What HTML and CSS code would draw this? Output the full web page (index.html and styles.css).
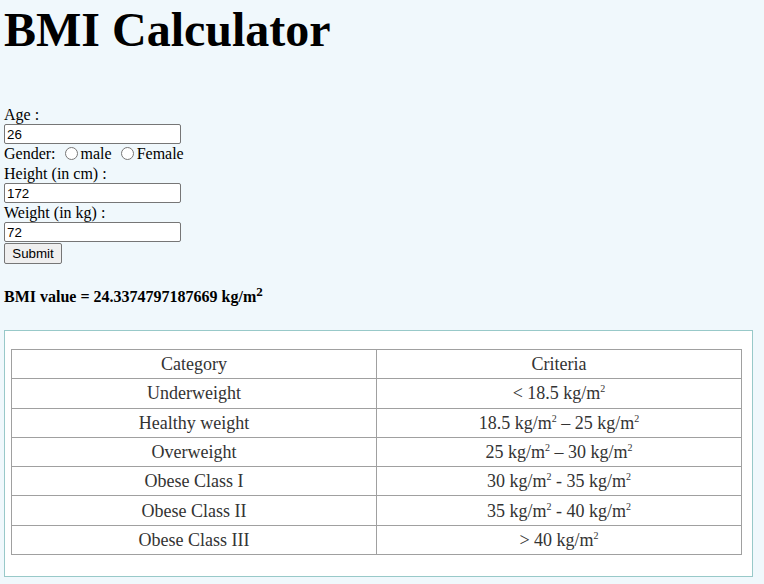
FILE: index.html
```html
<!DOCTYPE html>
<html>
<head>
<meta charset="utf-8">
<title>BMI Calculator</title>
<link rel="stylesheet" href="styles.css">
</head>
<body>
<h1 class="title">BMI Calculator</h1>
<form class="form">
  <div class="label">Age :</div>
  <div class="field"><input class="text" type="text" value="26"></div>
  <div class="label gender">Gender: <input type="radio" name="g">male <input type="radio" name="g">Female</div>
  <div class="label">Height (in cm) :</div>
  <div class="field"><input class="text" type="text" value="172"></div>
  <div class="label">Weight (in kg) :</div>
  <div class="field"><input class="text" type="text" value="72"></div>
  <div class="submit-row"><button class="btn" type="button">Submit</button></div>
</form>
<div class="result">BMI value = 24.3374797187669 kg/m<sup>2</sup></div>
<div class="chart">
  <table class="bmi">
    <tr><td>Category</td><td>Criteria</td></tr>
    <tr><td>Underweight</td><td>&lt; 18.5 kg/m<sup>2</sup></td></tr>
    <tr><td>Healthy weight</td><td>18.5 kg/m<sup>2</sup> – 25 kg/m<sup>2</sup></td></tr>
    <tr><td>Overweight</td><td>25 kg/m<sup>2</sup> – 30 kg/m<sup>2</sup></td></tr>
    <tr><td>Obese Class I</td><td>30 kg/m<sup>2</sup> - 35 kg/m<sup>2</sup></td></tr>
    <tr><td>Obese Class II</td><td>35 kg/m<sup>2</sup> - 40 kg/m<sup>2</sup></td></tr>
    <tr><td>Obese Class III</td><td>&gt; 40 kg/m<sup>2</sup></td></tr>
  </table>
</div>
</body>
</html>
```
FILE: styles.css
```css
html {
  background: #f0f8fc;
}
body {
  margin: 0;
  padding: 2px 4px 0 4px;
  background: #f0f8fc;
  color: #000;
  font-family: "Liberation Serif", "Times New Roman", serif;
  font-size: 16px;
}
.title {
  margin: 0 0 48px 0;
  font-size: 48px;
  line-height: 55px;
  font-weight: bold;
}
.form {
  margin: 0;
}
.label {
  height: 19px;
  line-height: 19px;
  white-space: nowrap;
}
.gender {
  height: 20px;
  line-height: 20px;
}
.gender input {
  margin: 0 3px 0 5px;
  width: 13px;
  height: 13px;
  vertical-align: -1px;
}
.field {
  height: 20px;
}
.text {
  display: block;
  box-sizing: border-box;
  width: 177px;
  height: 20px;
  margin: 0;
  padding: 1px 2px;
  border: 1px solid #767676;
  border-radius: 2px;
  background: #fff;
  font-family: "Liberation Sans", Arial, sans-serif;
  font-size: 13.333px;
  color: #000;
}
.submit-row {
  margin-top: 1px;
  height: 21px;
}
.btn {
  box-sizing: border-box;
  height: 21px;
  width: 58px;
  margin: 0;
  padding: 1px 6px;
  border: 1px solid #767676;
  border-radius: 2px;
  background: #efefef;
  font-family: "Liberation Sans", Arial, sans-serif;
  font-size: 13.333px;
  color: #000;
}
.result {
  margin-top: 23px;
  line-height: 19px;
  font-weight: bold;
}
.result sup {
  line-height: 0;
  font-size: 13px;
}
.chart {
  margin-top: 24px;
  box-sizing: border-box;
  width: 749px;
  border: 1px solid #98c9c9;
  background: #fff;
  padding: 18px 10px 21px 6px;
}
.bmi {
  width: 731px;
  border-collapse: collapse;
  table-layout: fixed;
  font-family: "Liberation Serif", "Times New Roman", serif;
  font-size: 18px;
  color: #333;
}
.bmi td {
  height: 28.3px;
  padding: 0;
  border: 1px solid #a0a0a0;
  text-align: center;
  vertical-align: middle;
  line-height: 20px;
}
.bmi sup {
  font-size: 10px;
  line-height: 0;
  vertical-align: 7px;
}
```
